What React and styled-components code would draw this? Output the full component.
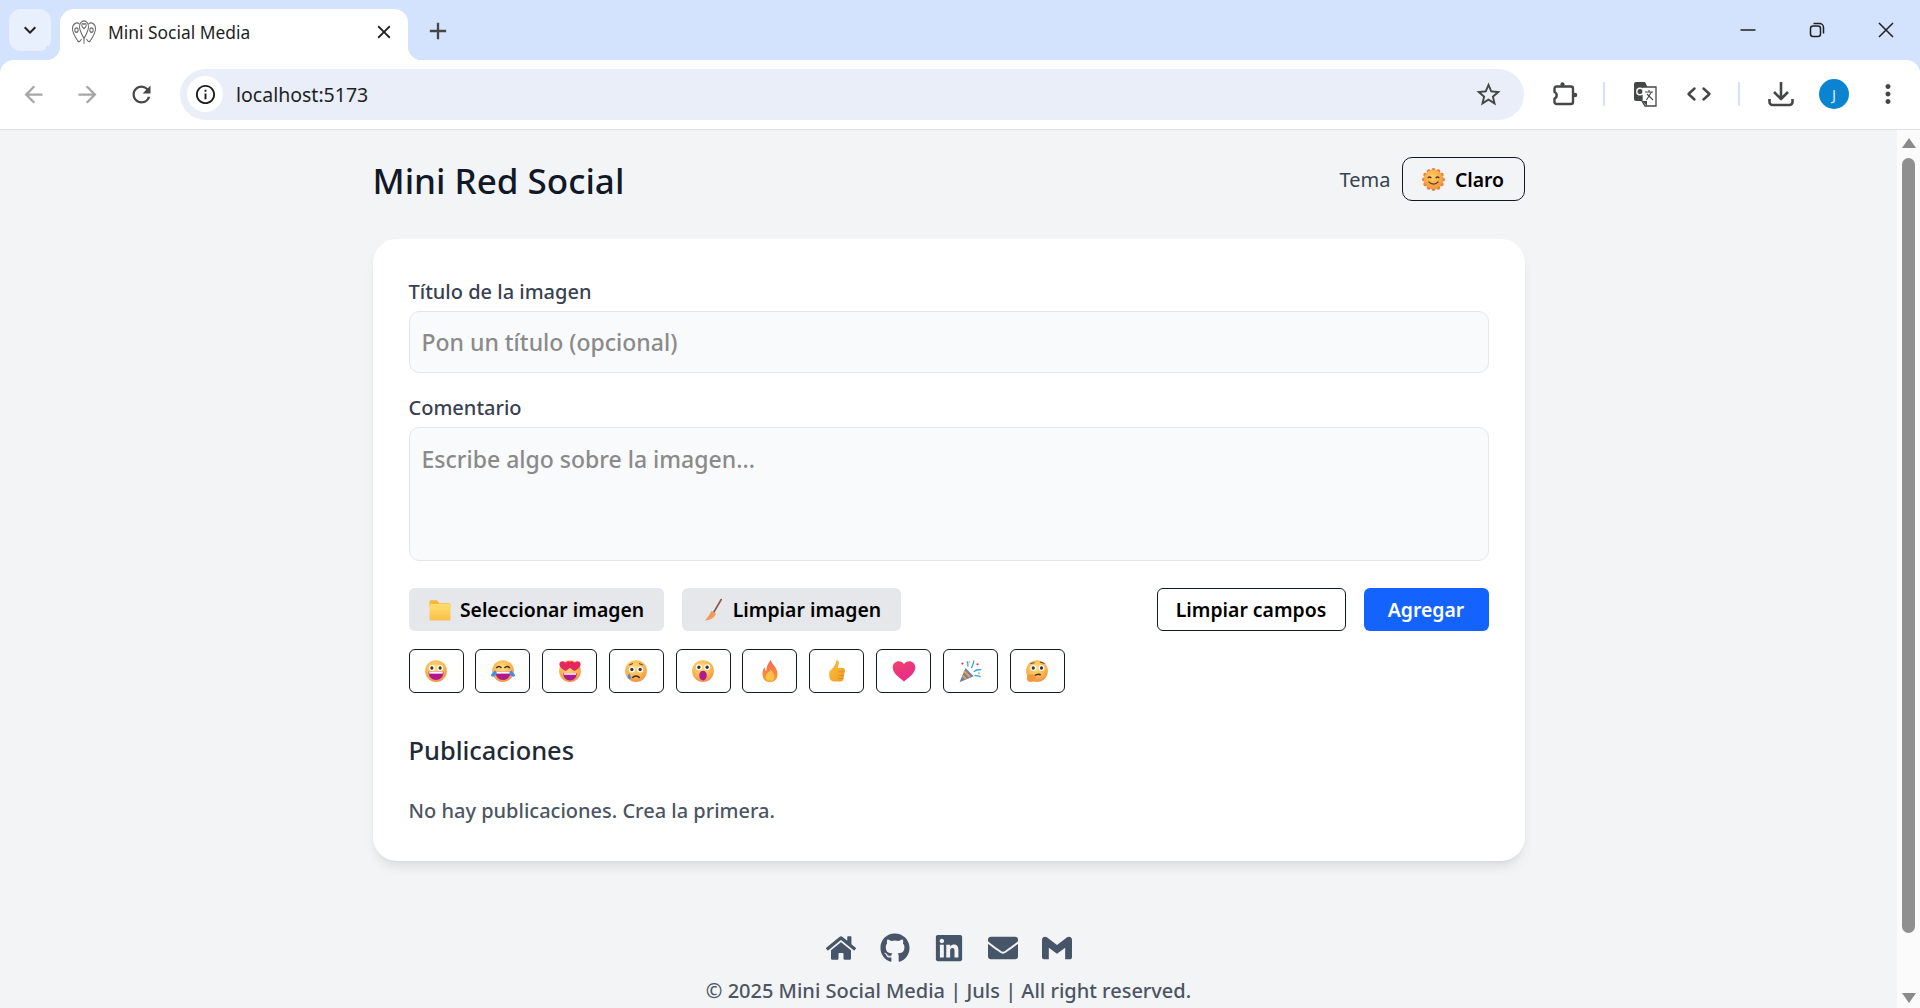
import React from "react";
import styled, { createGlobalStyle } from "styled-components";
import {
  MdArrowBack,
  MdArrowForward,
  MdRefresh,
  MdInfoOutline,
  MdStarBorder,
  MdMoreVert,
  MdKeyboardArrowDown,
  MdClose,
  MdAdd,
} from "react-icons/md";
import { FaHome, FaGithub, FaLinkedin, FaEnvelope } from "react-icons/fa";
import { SiGmail } from "react-icons/si";

const UI_FONT = `"Noto Sans", "Open Sans", "Liberation Sans", sans-serif`;

const GlobalStyle = createGlobalStyle`
  html, body { margin: 0; padding: 0; height: 100%; overflow: hidden; }
  body { font-family: ${UI_FONT}; background: #f3f4f6; }
  * { box-sizing: border-box; }
`;

const Shell = styled.div`
  height: 1008px;
  display: flex;
  flex-direction: column;
  overflow: hidden;
  background: #d3e3fd;
`;

const TabStrip = styled.div`
  height: 60px;
  flex: none;
  display: flex;
  align-items: flex-start;
  padding-top: 9px;
  padding-left: 9px;
`;

const TabMenu = styled.div`
  width: 42px;
  height: 42px;
  border-radius: 12px;
  background: #e8f0fe;
  display: flex;
  align-items: center;
  justify-content: center;
  font-size: 24px;
  color: #1f1f1f;
`;

const Tab = styled.div`
  width: 348px;
  height: 51px;
  margin-left: 9px;
  background: #fff;
  border-radius: 14px 14px 0 0;
  display: flex;
  align-items: center;
  padding: 0 13px 5px 11px;
  font-size: 17.4px;
  color: #1f1f1f;
  position: relative;
  &::before, &::after {
    content: "";
    position: absolute;
    bottom: 0;
    width: 14px;
    height: 14px;
  }
  &::before { left: -14px; background: radial-gradient(circle at 0 0, #d3e3fd 14px, #fff 14.5px); }
  &::after { right: -14px; background: radial-gradient(circle at 100% 0, #d3e3fd 14px, #fff 14.5px); }
`;

const TabTitle = styled.span`
  flex: 1;
  margin-left: 11px;
`;

const NewTab = styled.div`
  margin-left: 12px;
  width: 36px;
  height: 43px;
  display: flex;
  align-items: center;
  justify-content: center;
  font-size: 28px;
  color: #444746;
`;

const WindowControls = styled.div`
  margin-left: auto;
  display: flex;
  height: 42px;
  align-items: center;
  color: #1f1f1f;
`;

const WindowButton = styled.div`
  width: 69px;
  display: flex;
  justify-content: center;
  align-items: center;
`;

const Toolbar = styled.div`
  height: 70px;
  flex: none;
  background: #fff;
  border-bottom: 1px solid #dfe1e5;
  border-radius: 14px 14px 0 0;
  display: flex;
  align-items: center;
  padding: 0 0 1px 13px;
`;

const NavButton = styled.div`
  width: 40px;
  height: 40px;
  margin-right: 14px;
  display: flex;
  align-items: center;
  justify-content: center;
  font-size: 27px;
  color: ${(p) => (p.$off ? "#a6a6a6" : "#444746")};
`;

const Omnibox = styled.div`
  width: 1344px;
  height: 51px;
  margin-left: 5px;
  border-radius: 26px;
  background: #e9eef8;
  display: flex;
  align-items: center;
  padding: 0 21px 0 7px;
  font-size: 19.5px;
  color: #1f1f1f;
`;

const InfoChip = styled.div`
  width: 36px;
  height: 36px;
  border-radius: 50%;
  background: #fff;
  display: flex;
  align-items: center;
  justify-content: center;
  font-size: 23px;
`;

const Url = styled.span`
  flex: 1;
  margin-left: 13px;
`;

const ToolIcon = styled.div`
  display: flex;
  align-items: center;
  justify-content: center;
  width: ${(p) => p.$w || 40}px;
  margin-left: ${(p) => p.$ml || 0}px;
  font-size: 30px;
  color: #444746;
`;

const Divider = styled.div`
  width: 2px;
  height: 24px;
  background: #d3e3fd;
  margin-left: ${(p) => p.$ml}px;
`;

const Avatar = styled.div`
  width: 30px;
  height: 30px;
  border-radius: 50%;
  background: #0a84d0;
  color: #d5ecfa;
  font-size: 15px;
  display: flex;
  align-items: center;
  justify-content: center;
  margin-left: 18px;
`;

const Viewport = styled.div`
  flex: 1;
  min-height: 0;
  display: flex;
`;

const Page = styled.div`
  flex: 1;
  min-width: 0;
  overflow: hidden;
  background: #f3f4f6;
  display: flex;
  flex-direction: column;
  align-items: center;
  padding-top: 26px;
`;

const Scrollbar = styled.div`
  width: 23px;
  flex: none;
  background: #fbfbfb;
  display: flex;
  flex-direction: column;
  align-items: center;
  position: relative;
  padding-top: 8px;
`;

const ScrollArrow = styled.div`
  width: 0;
  height: 0;
  border-left: 7.5px solid transparent;
  border-right: 7.5px solid transparent;
  ${(p) => (p.$down ? "border-top: 10px solid #8a8a8a; position: absolute; bottom: 5px;" : "border-bottom: 10px solid #8a8a8a;")}
`;

const ScrollThumb = styled.div`
  width: 13px;
  height: 775px;
  margin-top: 10px;
  border-radius: 7px;
  background: #8f8f8f;
`;

const Container = styled.div`
  width: 1152px;
`;

const Header = styled.header`
  height: 46px;
  display: flex;
  align-items: center;
  justify-content: space-between;
  margin-bottom: 37px;
`;

const Title = styled.h1`
  margin: 3px 0 0;
  font-size: 35px;
  font-weight: 500;
  color: #111827;
  line-height: 45px;
`;

const ThemeGroup = styled.div`
  display: flex;
  align-items: center;
  gap: 11px;
  font-size: 20px;
  color: #374151;
`;

const ThemeButton = styled.button`
  height: 44px;
  width: 123px;
  border: 1.25px solid #111827;
  border-radius: 10px;
  background: transparent;
  display: flex;
  align-items: center;
  justify-content: center;
  gap: 10px;
  font: 600 19.4px ${UI_FONT};
  color: #000;
  padding: 0;
`;

const Card = styled.main`
  background: #fff;
  border-radius: 24px;
  padding: 40px 36px 36px;
  height: 622px;
  box-shadow: 0 8px 12px -3px rgba(0, 0, 0, 0.1), 0 3px 5px -4px rgba(0, 0, 0, 0.1);
`;

const Label = styled.label`
  display: block;
  font-size: 20px;
  font-weight: 500;
  color: #374151;
  line-height: 26px;
  margin-bottom: 6px;
`;

const fieldStyles = `
  display: block;
  width: 100%;
  background: #f9fafb;
  border: 1.25px solid #e5e7eb;
  border-radius: 10px;
  padding: 0 12px;
  font-family: ${UI_FONT};
  font-size: 23px;
  font-weight: 500;
  outline: none;
  &::placeholder { color: #8a8a8a; opacity: 1; }
`;

const TextInput = styled.input`
  ${fieldStyles}
  height: 62px;
  margin-bottom: 22px;
`;

const TextArea = styled.textarea`
  ${fieldStyles}
  height: 134px;
  padding-top: 16px;
  line-height: 30px;
  resize: none;
  margin-bottom: 27px;
`;

const ActionRow = styled.div`
  display: flex;
  align-items: center;
  gap: 18px;
  height: 43px;
  margin-bottom: 18px;
`;

const Spacer = styled.div`
  flex: 1;
`;

const BaseButton = styled.button`
  height: 43px;
  border-radius: 6px;
  padding: 0;
  width: ${(p) => p.$w}px;
  display: flex;
  align-items: center;
  justify-content: center;
  gap: 8px;
  font: 600 19.4px ${UI_FONT};
`;

const GreyButton = styled(BaseButton)`
  background: #e5e7eb;
  border: none;
  color: #000;
`;

const OutlineButton = styled(BaseButton)`
  background: #fff;
  border: 1.25px solid #111827;
  color: #000;
`;

const PrimaryButton = styled(BaseButton)`
  background: #1463ff;
  border: none;
  color: #fff;
`;

const EmojiRow = styled.div`
  display: flex;
  gap: 11.8px;
  margin-bottom: 40px;
`;

const EmojiButton = styled.button`
  width: 55px;
  height: 44px;
  border: 1.25px solid #111827;
  border-radius: 6px;
  background: #fff;
  padding: 0;
  display: flex;
  align-items: center;
  justify-content: center;
`;

const SectionTitle = styled.h2`
  margin: 0 0 30px;
  font-size: 25.4px;
  font-weight: 500;
  line-height: 34px;
  color: #1f2937;
`;

const Empty = styled.p`
  margin: 0;
  font-size: 20px;
  font-weight: 500;
  line-height: 28px;
  color: #4b5563;
`;

const Footer = styled.footer`
  margin-top: 70px;
  display: flex;
  flex-direction: column;
  align-items: center;
  color: #4b5563;
`;

const SocialRow = styled.div`
  display: flex;
  align-items: center;
  gap: 24px;
  font-size: 30px;
  color: #475569;
  height: 34px;
`;

const Copy = styled.p`
  margin: 12px 0 0;
  font-size: 20px;
  font-weight: 500;
  line-height: 28px;
`;

function Face({ id, size = 24, children }) {
  return (
    <svg width={size} height={size} viewBox="0 0 32 32">
      <defs>
        <radialGradient id={id} cx="0.45" cy="0.35" r="0.75">
          <stop offset="0" stopColor="#ffdf80" />
          <stop offset="0.6" stopColor="#fbb24a" />
          <stop offset="1" stopColor="#ee7f4e" />
        </radialGradient>
      </defs>
      <circle cx="16" cy="16" r="14.5" fill={`url(#${id})`} />
      {children}
    </svg>
  );
}

const Eye = ({ x, y = 12 }) => (
  <g>
    <circle cx={x} cy={y} r="4" fill="#fff" />
    <circle cx={x} cy={y} r="2.2" fill="#40302c" />
  </g>
);

const Mouth = () => (
  <g>
    <path d="M6 17h20c0 7-4.5 11-10 11S6 24 6 17z" fill="#b0188e" />
    <path d="M7 17h18v2.5H7z" fill="#fff" />
  </g>
);

const GrinEmoji = () => (
  <Face id="grin">
    <Eye x={10.5} />
    <Eye x={21.5} />
    <Mouth />
  </Face>
);

const JoyEmoji = () => (
  <Face id="joy">
    <path d="M7 12q3.5-4 7 0M18 12q3.5-4 7 0" stroke="#40302c" strokeWidth="2" fill="none" />
    <Mouth />
    <path d="M5 15c-2 3-5 5-5 7s4 2 6 0 2-5-1-7zM27 15c2 3 5 5 5 7s-4 2-6 0-2-5 1-7z" fill="#3f8fe8" />
  </Face>
);

const LoveEmoji = () => (
  <Face id="love">
    <path d="M10 16C5 13 1 10 2 6s6-4 8-1c2-3 7-3 8 1s-3 7-8 10z" fill="#e8265e" />
    <path d="M22 16c-5-3-9-6-8-10s6-4 8-1c2-3 7-3 8 1s-3 7-8 10z" fill="#e8265e" />
    <path d="M7 19h18c0 6-4 9.5-9 9.5S7 25 7 19z" fill="#b0188e" />
    <path d="M8 19h16v2H8z" fill="#fff" />
  </Face>
);

const SadEmoji = () => (
  <Face id="sad">
    <Eye x={10.5} y={14} />
    <Eye x={21.5} y={14} />
    <path d="M7 8l5-2M25 8l-5-2" stroke="#6b4a3a" strokeWidth="1.5" />
    <path d="M11 25q5-5 10 0" stroke="#40302c" strokeWidth="2" fill="none" />
    <path d="M7 19c-2 3-3 5-1 7s4 0 3-2-1-3-2-5z" fill="#3f8fe8" />
  </Face>
);

const WowEmoji = () => (
  <Face id="wow">
    <Eye x={10.5} y={11} />
    <Eye x={21.5} y={11} />
    <ellipse cx="16" cy="22" rx="5" ry="6.5" fill="#b0188e" />
  </Face>
);

const FireEmoji = () => (
  <svg width="24" height="24" viewBox="0 0 32 32">
    <defs>
      <linearGradient id="fire" x1="0" y1="0" x2="0" y2="1">
        <stop offset="0" stopColor="#f4695a" />
        <stop offset="1" stopColor="#fb9a2c" />
      </linearGradient>
    </defs>
    <path d="M17 1c1 6 9 10 9 19 0 7-4.5 11-10 11S6 27 6 20c0-4 1-7 3-9 0 3 1 4 2 5 0-6 3-11 6-15z" fill="url(#fire)" />
    <path d="M17 14c1 3 5 5 5 10 0 4-3 6-6 6s-6-2-6-6c0-5 5-6 7-10z" fill="#fdc04a" />
  </svg>
);

const ThumbEmoji = () => (
  <svg width="24" height="24" viewBox="0 0 32 32">
    <defs>
      <linearGradient id="thumb" x1="0" y1="0" x2="1" y2="1">
        <stop offset="0" stopColor="#fdc23c" />
        <stop offset="1" stopColor="#ee9a28" />
      </linearGradient>
    </defs>
    <path d="M15 2c2-1 4 1 3.5 4L17 12h7c2 0 3 2 2.5 4l-2 11c-.5 2-2 3-4 3h-8c-4 0-7-3-7-8v-3c0-3 2-4 4-6 3-3 5-7 5.5-11z" fill="url(#thumb)" />
    <path d="M18 17h8M18 22h7M17 26h7" stroke="#d98a20" strokeWidth="1" />
  </svg>
);

const HeartEmoji = () => (
  <svg width="24" height="24" viewBox="0 0 32 32">
    <defs>
      <linearGradient id="heart" x1="0" y1="0" x2="0.6" y2="1">
        <stop offset="0" stopColor="#f0446a" />
        <stop offset="1" stopColor="#e82a8c" />
      </linearGradient>
    </defs>
    <path d="M16 30C7 23 1 18 1 11c0-5 4-8 8-8 3 0 5.5 1.5 7 4 1.5-2.5 4-4 7-4 4 0 8 3 8 8 0 7-6 12-15 19z" fill="url(#heart)" />
  </svg>
);

const PartyEmoji = () => (
  <svg width="24" height="24" viewBox="0 0 32 32">
    <path d="M2 31l8-19 11 11z" fill="#6f7fb4" />
    <path d="M6 22l5 5M8 16l8 8" stroke="#e8a33c" strokeWidth="2.5" />
    <path d="M13 10c1-3 0-5-1-7M18 12c1-4 3-5 3-10M21 17c3-3 6-3 10-3M22 22c3 0 6 0 8 2" stroke="#38a8e8" strokeWidth="1.8" fill="none" />
    <circle cx="6" cy="6" r="1.5" fill="#e8365e" />
    <circle cx="26" cy="7" r="1.5" fill="#e8365e" />
    <circle cx="15" cy="4" r="1.2" fill="#f4b83c" />
    <circle cx="28" cy="19" r="1.2" fill="#8dc63f" />
  </svg>
);

const ThinkEmoji = () => (
  <Face id="think">
    <Eye x={11} y={12} />
    <Eye x={22} y={12} />
    <path d="M7 6l6-1M20 4l6 2" stroke="#6b4a3a" strokeWidth="1.5" />
    <path d="M13 22q4-3 8-1" stroke="#40302c" strokeWidth="2" fill="none" />
    <path d="M3 22c2-2 8-2 10 0s1 7-2 8-7 1-8-2 0-4 0-6z" fill="#f0983c" />
  </Face>
);

const SunFace = () => (
  <svg width="23" height="23" viewBox="0 0 32 32">
    <defs>
      <radialGradient id="sun" cx="0.45" cy="0.35" r="0.75">
        <stop offset="0" stopColor="#ffd25c" />
        <stop offset="1" stopColor="#f08a3c" />
      </radialGradient>
    </defs>
    <g fill="#e8803a">
      {[0, 30, 60, 90, 120, 150, 180, 210, 240, 270, 300, 330].map((a) => (
        <circle key={a} cx="16" cy="2.8" r="2.8" transform={`rotate(${a} 16 16)`} />
      ))}
    </g>
    <circle cx="16" cy="16" r="13.5" fill="url(#sun)" />
    <path d="M8 14q2.5-3 5 0M19 14q2.5-3 5 0" stroke="#5a3a28" strokeWidth="1.8" fill="none" />
    <path d="M9 19q7 7 14 0" stroke="#5a3a28" strokeWidth="1.8" fill="none" />
  </svg>
);

const FolderEmoji = () => (
  <svg width="24" height="24" viewBox="0 0 32 32">
    <defs>
      <linearGradient id="folder" x1="0" y1="0" x2="0" y2="1">
        <stop offset="0" stopColor="#ffe06a" />
        <stop offset="1" stopColor="#fdbd4c" />
      </linearGradient>
    </defs>
    <path d="M2 5c0-1 .8-2 2-2h8l3 4h13c1.5 0 2 1 2 2v4H2z" fill="#f8b73c" />
    <rect x="2" y="8" width="28" height="22" rx="2" fill="url(#folder)" />
  </svg>
);

const BroomEmoji = () => (
  <svg width="24" height="24" viewBox="0 0 32 32">
    <path d="M27 2L17 19" stroke="#8a5a4a" strokeWidth="2.2" strokeLinecap="round" />
    <path d="M14 17l6 4c-2 5-7 9-15 9 3-3 6-7 9-13z" fill="#f09a5c" />
  </svg>
);

// favicon of the tab: three map pins with hearts, thin grey outline
const TabIcon = () => (
  <svg width="26" height="26" viewBox="0 4 26 20" preserveAspectRatio="none" fill="none" stroke="#6a6a6a" strokeWidth="1">
    <path d="M13 19c-3-4-4.5-6-4.5-9a4.5 4.5 0 0 1 9 0c0 3-1.5 5-4.5 9z" />
    <path d="M13 11.5c-1.5-1-2.2-1.8-2.2-2.7a1.1 1.1 0 0 1 2.2-.3 1.1 1.1 0 0 1 2.2.3c0 .9-.7 1.7-2.2 2.7z" />
    <path d="M8.5 8a4.3 4.3 0 0 0-7 3.5c0 3 2 5.5 5 9 1 1 1.5 1.5 2.5.5l1.500-1.500" />
    <path d="M17.5 8a4.3 4.3 0 0 1 7 3.5c0 3-2 5.5-5 9-1 1-1.5 1.5-2.5.5l-1.500-1.500" />
    <circle cx="5.5" cy="12.5" r="1.7" />
    <circle cx="20.5" cy="12.5" r="1.7" />
    <path d="M13 19v4" />
  </svg>
);

const RestoreIcon = () => (
  <svg width="16" height="16" viewBox="0 0 16 16" fill="none" stroke="#1f1f1f" strokeWidth="1.5">
    <rect x="1.5" y="4" width="10" height="10.5" rx="2.5" />
    <path d="M4.5 1.5h6a4 4 0 0 1 4 4v6" />
  </svg>
);

const MinimizeIcon = () => (
  <svg width="16" height="16" viewBox="0 0 16 16" stroke="#1f1f1f" strokeWidth="1.5">
    <path d="M0.5 8h15" />
  </svg>
);

const CloseIcon = () => (
  <svg width="16" height="16" viewBox="0 0 16 16" stroke="#1f1f1f" strokeWidth="1.5">
    <path d="M1 1l14 14M15 1L1 15" />
  </svg>
);

const ExtensionIcon = () => (
  <svg width="26" height="26" viewBox="0 0 26 26" fill="none" stroke="#444746" strokeWidth="2.4" strokeLinejoin="round">
    <path d="M3.5 5.5H18a2 2 0 0 1 2 2V21a2 2 0 0 1-2 2H3.5a2 2 0 0 1-2-2v-3.5a3.5 3.5 0 0 0 0-6.5V7.5a2 2 0 0 1 2-2z" />
    <circle cx="9.5" cy="3.2" r="2" fill="#444746" stroke="none" />
    <circle cx="22" cy="14" r="2.3" fill="#444746" stroke="none" />
  </svg>
);

const TranslateIcon = () => (
  <svg width="26" height="26" viewBox="0 0 26 26">
    <path d="M2 3a2 2 0 0 1 2-2h9l2 4v15H4a2 2 0 0 1-2-2z" fill="#444746" />
    <path d="M10 6h14v19H13l-3-5z" fill="#fff" stroke="#444746" strokeWidth="1.3" />
    <circle cx="8" cy="10.5" r="3.2" fill="none" stroke="#fff" strokeWidth="1.4" />
    <path d="M13 11h8M17 9v2M14.5 19l5-8M15 13l6 6" stroke="#444746" strokeWidth="1.1" fill="none" />
    <path d="M10 20h5v5z" fill="#444746" />
  </svg>
);

const CodeIcon = () => (
  <svg width="26" height="26" viewBox="0 0 26 26" fill="none" stroke="#444746" strokeWidth="2.4" strokeLinecap="round" strokeLinejoin="round">
    <path d="M8.5 7.5L2.5 13l6 5.5M17.5 7.5l6 5.5-6 5.5" />
  </svg>
);

const DownloadIcon = () => (
  <svg width="26" height="26" viewBox="0 0 26 26" fill="none" stroke="#444746" strokeWidth="2.6" strokeLinejoin="round">
    <path d="M13 1v16M6 11l7 7 7-7" />
    <path d="M1.5 18v3a3 3 0 0 0 3 3h17a3 3 0 0 0 3-3v-3" />
  </svg>
);

const emojis = [GrinEmoji, JoyEmoji, LoveEmoji, SadEmoji, WowEmoji, FireEmoji, ThumbEmoji, HeartEmoji, PartyEmoji, ThinkEmoji];

export default function App() {
  return (
    <Shell>
      <GlobalStyle />
      <TabStrip>
        <TabMenu><MdKeyboardArrowDown /></TabMenu>
        <Tab>
          <TabIcon />
          <TabTitle>Mini Social Media</TabTitle>
          <MdClose size={22} />
        </Tab>
        <NewTab><MdAdd /></NewTab>
        <WindowControls>
          <WindowButton><MinimizeIcon /></WindowButton>
          <WindowButton><RestoreIcon /></WindowButton>
          <WindowButton><CloseIcon /></WindowButton>
        </WindowControls>
      </TabStrip>
      <Toolbar>
        <NavButton $off><MdArrowBack /></NavButton>
        <NavButton $off><MdArrowForward /></NavButton>
        <NavButton><MdRefresh /></NavButton>
        <Omnibox>
          <InfoChip><MdInfoOutline /></InfoChip>
          <Url>localhost:5173</Url>
          <MdStarBorder size={29} color="#444746" />
        </Omnibox>
        <ToolIcon $ml={22}><ExtensionIcon /></ToolIcon>
        <Divider $ml={17} />
        <ToolIcon $ml={20}><TranslateIcon /></ToolIcon>
        <ToolIcon $ml={14}><CodeIcon /></ToolIcon>
        <Divider $ml={19} />
        <ToolIcon $ml={21}><DownloadIcon /></ToolIcon>
        <Avatar>J</Avatar>
        <ToolIcon $ml={24} $w={30}><MdMoreVert /></ToolIcon>
      </Toolbar>
      <Viewport>
        <Page>
          <Container>
            <Header>
              <Title>Mini Red Social</Title>
              <ThemeGroup>
                Tema
                <ThemeButton><SunFace />Claro</ThemeButton>
              </ThemeGroup>
            </Header>
            <Card>
              <Label>Título de la imagen</Label>
              <TextInput placeholder="Pon un título (opcional)" />
              <Label>Comentario</Label>
              <TextArea placeholder="Escribe algo sobre la imagen..." />
              <ActionRow>
                <GreyButton $w={255}><FolderEmoji />Seleccionar imagen</GreyButton>
                <GreyButton $w={219}><BroomEmoji />Limpiar imagen</GreyButton>
                <Spacer />
                <OutlineButton $w={189}>Limpiar campos</OutlineButton>
                <PrimaryButton $w={125}>Agregar</PrimaryButton>
              </ActionRow>
              <EmojiRow>
                {emojis.map((Emoji, i) => (
                  <EmojiButton key={i}><Emoji /></EmojiButton>
                ))}
              </EmojiRow>
              <SectionTitle>Publicaciones</SectionTitle>
              <Empty>No hay publicaciones. Crea la primera.</Empty>
            </Card>
            <Footer>
              <SocialRow>
                <FaHome />
                <FaGithub />
                <FaLinkedin />
                <FaEnvelope />
                <SiGmail />
              </SocialRow>
              <Copy>© 2025 Mini Social Media | Juls | All right reserved.</Copy>
            </Footer>
          </Container>
        </Page>
        <Scrollbar>
          <ScrollArrow />
          <ScrollThumb />
          <ScrollArrow $down />
        </Scrollbar>
      </Viewport>
    </Shell>
  );
}
